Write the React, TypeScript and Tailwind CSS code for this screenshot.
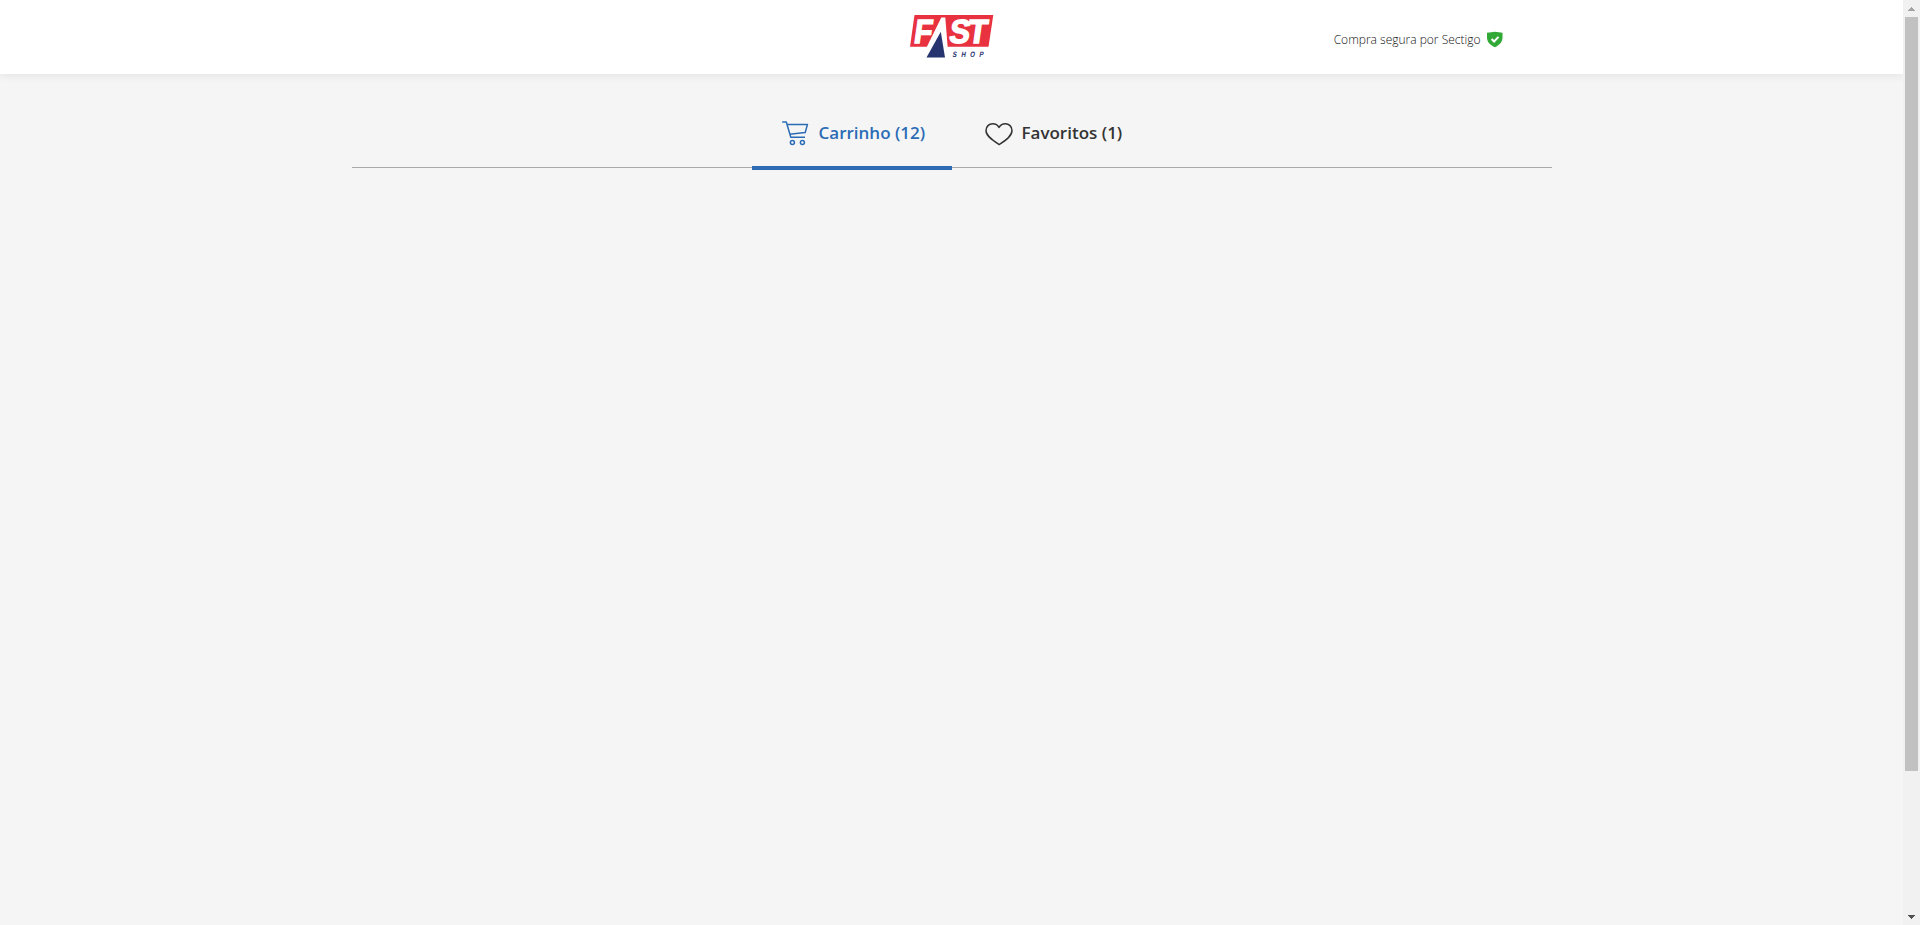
function Logo() {
  return (
    <svg width="84" height="44" viewBox="0 0 84 44" role="img" aria-label="Fast Shop" className="block">
      <path d="M4.500 1H83.300L78.500 32.800H0Z" fill="#e8323f" />
      <path d="M31.300 3.500h4L37.700 33.500H16.500Z" fill="#fff" />
      <path d="M30.800 17.800L35 43.600H16.500Z" fill="#26356f" />
      <g fill="#fff" stroke="#fff" strokeWidth="1.400" fontFamily="'Liberation Sans', sans-serif" fontWeight="700" fontSize="33.500" transform="translate(0 29.300) skewX(-8)">
        <text x="3" y="0" textLength="18" lengthAdjust="spacingAndGlyphs">F</text>
        <text x="38.300" y="0" textLength="20.500" lengthAdjust="spacingAndGlyphs">S</text>
        <text x="56.500" y="0" textLength="19.500" lengthAdjust="spacingAndGlyphs">T</text>
      </g>
      <text transform="translate(42.300 43.200) skewX(-10) scale(.8 1)" x="0 10.800 21.800 33.400" y="0" fontSize="7.800" fill="#26356f" fontFamily="'Liberation Sans', sans-serif" fontWeight="700">SHOP</text>
    </svg>
  );
}

function Shield() {
  return (
    <svg width="16" height="17" viewBox="0 0 16 17" className="block">
      <path d="M0 1.8C3 1.7 5.4 1.2 8 .8c2.600.400 5 .900 7.500 1V6.500c0 5-3.500 7.800-7.500 9.700C3.500 14.300 0 11.500 0 6.500Z" fill="#32a937" />
      <path d="M4.600 8l2.500 2.500L11.500 5.900" fill="none" stroke="#fff" strokeWidth="2" />
    </svg>
  );
}

function Cart() {
  return (
    <svg width="28" height="26" viewBox="0 0 28 26" fill="none" stroke="#2b6cb5" strokeWidth="1.500" strokeLinejoin="round" className="block shrink-0">
      <path d="M.2 1H4.300L8.800 16.200H23M5.200 3.400H25.500L23.200 11.500L7.500 13.200" />
      <circle cx="10.400" cy="21.400" r="2" />
      <circle cx="20.400" cy="21.400" r="2" />
    </svg>
  );
}

function Heart() {
  return (
    <svg width="28" height="24" viewBox="0 0 28 24" fill="none" stroke="#333" strokeWidth="1.500" strokeLinejoin="round" className="block shrink-0">
      <path d="M14.300 22.500C8.800 19 1 14.500 1 8.500C1 4.500 4 1.700 7.600 1.700C10.500 1.700 12.900 3.100 14 5.500C15.300 3.100 17.500 1.700 20.400 1.700C24 1.700 27 4.500 27 8.500C27 14.500 19.500 19.200 14.300 22.500Z" />
    </svg>
  );
}

function Scrollbar() {
  return (
    <div className="flex h-full w-[17px] shrink-0 flex-col items-center bg-[#f1f1f1]">
      <div className="flex h-[17px] w-full items-center justify-center">
        <svg width="7" height="4" viewBox="0 0 7 4" className="block" shapeRendering="crispEdges">
          <path d="M3 0h1v1h1v1h1v1h1v1H0V3h1V2h1V1h1Z" fill="#a3a3a3" />
        </svg>
      </div>
      <div className="h-[754px] w-[13px] bg-[#c1c1c1]" />
      <div className="mt-auto flex h-[17px] w-full items-center justify-center">
        <svg width="7" height="4" viewBox="0 0 7 4" className="block" shapeRendering="crispEdges">
          <path d="M0 0h7v1H6v1H5v1H4v1H3V3H2V2H1V1H0Z" fill="#505050" />
        </svg>
      </div>
    </div>
  );
}

export default function App() {
  return (
    <div className="flex h-[925px] w-full overflow-hidden bg-[#f5f5f5] font-['Open_Sans',sans-serif]">
      <div className="flex min-w-0 flex-1 flex-col overflow-hidden">
        <header className="h-[74px] shrink-0 bg-white shadow-[0_2px_8px_rgba(0,0,0,0.07)]">
          <div className="mx-auto grid h-full w-[1200px] grid-cols-3">
            <div />
            <div className="flex justify-center pt-3.5">
              <Logo />
            </div>
            <div className="flex items-start justify-end pt-[31px] pr-[49px]">
              <span className="mr-1.5 text-[12px] leading-[18px] font-light whitespace-nowrap text-[#111]">Compra segura por Sectigo</span>
              <Shield />
            </div>
          </div>
        </header>
        <nav className="mx-auto mt-8 flex h-[62px] w-[1200px] shrink-0 justify-center border-b border-[#a9a9a9]">
          <a className="-mb-[3px] flex h-16 w-[200px] border-b-4 border-[#2b6cb5] pt-[15px] pl-[30px] text-[#2b6cb5]">
            <Cart />
            <span className="ml-[9px] text-[17px] leading-6 font-semibold whitespace-nowrap">Carrinho (12)</span>
          </a>
          <a className="flex w-[200px] pt-4 pl-[33px] text-[#333]">
            <Heart />
            <span className="-mt-px ml-[9px] text-[17px] leading-6 font-semibold whitespace-nowrap">Favoritos (1)</span>
          </a>
        </nav>
        <main className="flex-1" />
      </div>
      <Scrollbar />
    </div>
  );
}
